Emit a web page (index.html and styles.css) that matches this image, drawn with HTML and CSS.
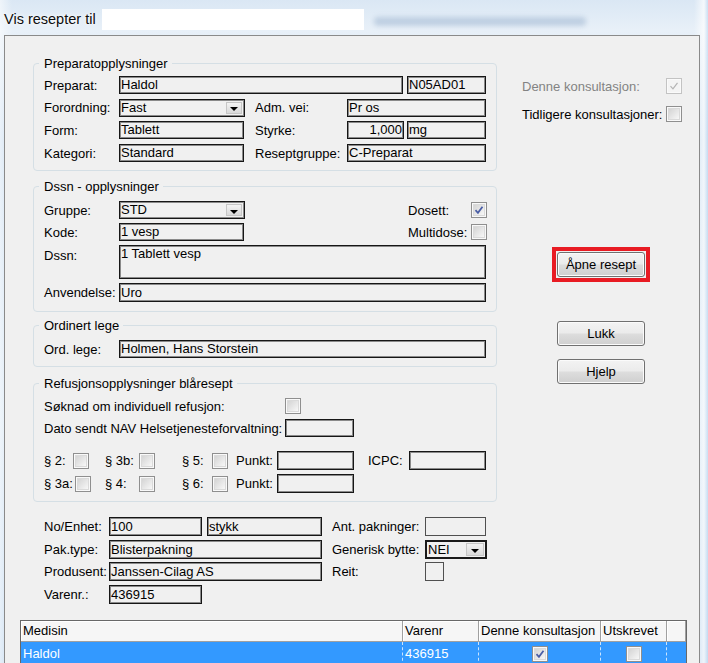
FILE: index.html
```html
<!DOCTYPE html>
<html lang="no">
<head>
<meta charset="utf-8">
<title>Vis resepter til</title>
<link rel="stylesheet" href="styles.css">
</head>
<body>
<div class="titlebar">
  <span class="title">Vis resepter til</span>
  <span class="redact"></span>
  <span class="title-blur"></span>
</div>
<div class="window">
  <div class="top">
    <div class="left-col">
      <section class="group g-prep">
        <div class="gtitle">Preparatopplysninger</div>
        <div class="row first">
          <span class="lbl">Preparat:</span>
          <span class="field w-preparat">Haldol</span>
          <span class="field w-code ml4">N05AD01</span>
        </div>
        <div class="row">
          <span class="lbl">Forordning:</span>
          <span class="combo w-combo"><span class="ctext">Fast</span><span class="cbtn"><i class="arrow"></i></span></span>
          <span class="lbl2 ml10">Adm. vei:</span>
          <span class="field w-right">Pr os</span>
        </div>
        <div class="row">
          <span class="lbl">Form:</span>
          <span class="field w-short">Tablett</span>
          <span class="lbl2 ml11">Styrke:</span>
          <span class="field w-num num">1,000</span>
          <span class="field w-code ml3">mg</span>
        </div>
        <div class="row">
          <span class="lbl">Kategori:</span>
          <span class="field w-short">Standard</span>
          <span class="lbl2 ml11">Reseptgruppe:</span>
          <span class="field w-right">C-Preparat</span>
        </div>
      </section>

      <section class="group g-dssn">
        <div class="gtitle">Dssn - opplysninger</div>
        <div class="row first">
          <span class="lbl">Gruppe:</span>
          <span class="combo w-combo"><span class="ctext">STD</span><span class="cbtn"><i class="arrow"></i></span></span>
          <span class="lbl-chk ml163">Dosett:</span>
          <span class="cb"><svg viewBox="0 0 16 16" class="tick"><path d="M4 8.2 L6.8 11.2 L12 4.3"/></svg></span>
        </div>
        <div class="row">
          <span class="lbl">Kode:</span>
          <span class="field w-short">1 vesp</span>
          <span class="lbl-chk ml164">Multidose:</span>
          <span class="cb"></span>
        </div>
        <div class="row tall">
          <span class="lbl top-lbl">Dssn:</span>
          <span class="field w-wide area">1 Tablett vesp</span>
        </div>
        <div class="row h19">
          <span class="lbl">Anvendelse:</span>
          <span class="field w-wide h19">Uro</span>
        </div>
      </section>

      <section class="group g-lege">
        <div class="gtitle">Ordinert lege</div>
        <div class="row first">
          <span class="lbl">Ord. lege:</span>
          <span class="field w-wide">Holmen, Hans Storstein</span>
        </div>
      </section>

      <section class="group g-ref">
        <div class="gtitle">Refusjonsopplysninger blåresept</div>
        <div class="row first h16">
          <span class="lbl w241">Søknad om individuell refusjon:</span>
          <span class="cb"></span>
        </div>
        <div class="row r-dato">
          <span class="lbl w241">Dato sendt NAV Helsetjenesteforvaltning:</span>
          <span class="field w69"></span>
        </div>
        <div class="row h19 r-par">
          <span class="lbl w29">§ 2:</span>
          <span class="cb"></span>
          <span class="lbl w34 ml16">§ 3b:</span>
          <span class="cb"></span>
          <span class="lbl w30 ml27">§ 5:</span>
          <span class="cb"></span>
          <span class="lbl w41 ml8">Punkt:</span>
          <span class="field w77 h19"></span>
          <span class="lbl w41 ml14">ICPC:</span>
          <span class="field w77 h19"></span>
        </div>
        <div class="row h19">
          <span class="lbl w31">§ 3a:</span>
          <span class="cb"></span>
          <span class="lbl w34 ml14">§ 4:</span>
          <span class="cb"></span>
          <span class="lbl w30 ml27">§ 6:</span>
          <span class="cb"></span>
          <span class="lbl w41 ml8">Punkt:</span>
          <span class="field w77 h19"></span>
        </div>
      </section>
    </div>

    <div class="right-col">
      <div class="crow">
        <span class="clbl disabled">Denne konsultasjon:</span>
        <span class="cb cb-disabled"><svg viewBox="0 0 16 16" class="tick grey"><path d="M4 8.2 L6.8 11.2 L12 4.3"/></svg></span>
      </div>
      <div class="crow">
        <span class="clbl">Tidligere konsultasjoner:</span>
        <span class="cb"></span>
      </div>
      <div class="highlight"><div class="btn">Åpne resept</div></div>
      <div class="btn btn-plain btn-lukk">Lukk</div>
      <div class="btn btn-plain btn-hjelp">Hjelp</div>
    </div>
  </div>

  <div class="fields">
    <div class="row first">
      <span class="lbl lbl-b">No/Enhet:</span>
      <span class="field w93">100</span>
      <span class="field w115 ml5">stykk</span>
      <span class="lbl lbl-b2">Ant. pakninger:</span>
      <span class="field thin w61"></span>
    </div>
    <div class="row">
      <span class="lbl lbl-b">Pak.type:</span>
      <span class="field w213">Blisterpakning</span>
      <span class="lbl lbl-b2">Generisk bytte:</span>
      <span class="combo thick w62"><span class="ctext">NEI</span><span class="cbtn wide"><i class="arrow"></i></span></span>
    </div>
    <div class="row">
      <span class="lbl lbl-b">Produsent:</span>
      <span class="field w213">Janssen-Cilag AS</span>
      <span class="lbl lbl-b2">Reit:</span>
      <span class="field thin w19"></span>
    </div>
    <div class="row">
      <span class="lbl lbl-b">Varenr.:</span>
      <span class="field w93">436915</span>
    </div>
  </div>

  <div class="grid">
    <div class="ghead">
      <div class="hcell">Medisin</div>
      <div class="hcell">Varenr</div>
      <div class="hcell">Denne konsultasjon</div>
      <div class="hcell">Utskrevet</div>
      <div class="hcell"></div>
    </div>
    <div class="grow">
      <div class="gcell">Haldol</div>
      <div class="gcell">436915</div>
      <div class="gcell center"><span class="cb"><svg viewBox="0 0 16 16" class="tick"><path d="M4 8.2 L6.8 11.2 L12 4.3"/></svg></span></div>
      <div class="gcell center"><span class="cb"></span></div>
      <div class="gcell last"></div>
    </div>
  </div>
</div>
</body>
</html>
```

FILE: styles.css
```css
* { box-sizing: border-box; }
html, body { margin: 0; padding: 0; }
body {
  width: 708px;
  height: 663px;
  overflow: hidden;
  font-family: "Liberation Sans", Arial, sans-serif;
  font-size: 13px;
  color: #000;
  background:
    linear-gradient(90deg, rgba(255,255,255,0.55) 0, rgba(255,255,255,0) 12px, rgba(255,255,255,0) 694px, rgba(255,255,255,0.7) 704px, rgba(190,215,240,0.6) 708px),
    linear-gradient(180deg, #dae7f4 0%, #e8f0f8 30px, #cfe0f1 140px, #dce9f5 420px, #c6dbf0 100%);
}

/* title bar */
.titlebar { height: 35px; display: flex; align-items: center; padding: 3px 0 0 4px; }
.title {
  width: 98px; flex: none;
  font-size: 14.5px; line-height: 18px; color: #0d0d0d;
  text-shadow: 0 0 7px #fff, 0 0 3px #fff;
  white-space: nowrap;
}
.redact { width: 262px; height: 21px; background: #fff; flex: none; }
.title-blur {
  width: 212px; height: 9px; margin: 4px 0 0 10px;
  background: rgba(105, 140, 180, 0.3);
  filter: blur(2.5px); border-radius: 4px;
}

/* dialog */
.window {
  margin-left: 4px; width: 696px; height: 630px;
  border: 1px solid #8a8a8a; border-bottom: 0;
  background: #f0f0f0;
  display: flex; flex-direction: column;
}
.top { display: flex; align-items: flex-start; }
.left-col { margin: 27px 0 0 28px; width: 464px; flex: none; }
.right-col { margin: 42px 0 0 25px; display: flex; flex-direction: column; }

/* group boxes */
.group { border: 1px solid #d5dfe5; border-radius: 4px; padding: 0 0 8px 10px; }
.gtitle {
  width: fit-content; height: 15px; line-height: 15px;
  margin: -8px 0 0 -5px; padding: 0 4px 0 5px;
  background: #f0f0f0; white-space: nowrap;
}
.g-dssn { margin-top: 15px; padding-bottom: 9px; }
.g-lege { margin-top: 13px; }
.g-ref { margin-top: 16px; }

/* rows */
.row { display: flex; align-items: center; height: 18px; margin-top: 4px; }
.row.first { margin-top: 7px; }
.g-prep .row { margin-top: 4.7px; }
.g-prep .row.first { margin-top: 5px; }
.row.h19 { height: 19px; }
.row.h16 { height: 16px; }
.row.tall { height: 34px; align-items: flex-start; }
.g-ref .r-dato { margin-top: 5px; }
.g-ref .r-par { margin-top: 14px; }

.lbl { width: 75px; flex: none; white-space: nowrap; }
.lbl2 { width: 92px; flex: none; white-space: nowrap; }
.lbl-chk { width: 63px; flex: none; white-space: nowrap; }
.top-lbl { margin-top: 3px; }

/* widths and gaps */
.w-preparat { width: 284px; }
.w-code { width: 79px; }
.w-combo { width: 126px; }
.w-right { width: 139px; }
.w-short { width: 125px; }
.w-num { width: 57px; }
.w-wide { width: 367px; }
.w241 { width: 241px; }
.w69 { width: 69px; }
.w77 { width: 77px; }
.w29 { width: 29px; }
.w30 { width: 30px; }
.w31 { width: 31px; }
.w34 { width: 34px; }
.w41 { width: 41px; }
.w93 { width: 93px; }
.w115 { width: 115px; }
.w213 { width: 213px; }
.w61 { width: 61px; }
.w62 { width: 62px; }
.w19 { width: 19px; height: 19px; }
.ml3 { margin-left: 3px; }
.ml4 { margin-left: 4px; }
.ml5 { margin-left: 5px; }
.ml8 { margin-left: 8px; }
.ml10 { margin-left: 10px; }
.ml11 { margin-left: 11px; }
.ml14 { margin-left: 14px; }
.ml16 { margin-left: 16px; }
.ml27 { margin-left: 27px; }
.ml163 { margin-left: 163px; }
.ml164 { margin-left: 164px; }

/* inputs */
.field {
  flex: none; height: 18px;
  border: 1px solid #161616;
  box-shadow: inset 0 0 0 1px #8a8a8a;
  padding: 0 0 0 1px;
  line-height: 16px; white-space: nowrap; overflow: hidden;
  background: #f0f0f0;
}
.field.h19 { height: 19px; line-height: 17px; }
.field.area { height: 34px; }
.field.num { text-align: right; padding: 0 1px 0 0; }
.field.thin { border-color: #505050; box-shadow: none; }

.combo {
  flex: none; display: flex; height: 18px;
  border: 1px solid #161616;
  box-shadow: inset 0 0 0 1px #8a8a8a;
  background: #f0f0f0;
}
.combo.thick { height: 19px; border: 2px solid #1a1a1a; box-shadow: none; }
.ctext { flex: 1; padding-left: 1px; line-height: 16px; white-space: nowrap; }
.combo.thick .ctext { line-height: 15px; padding-left: 1px; }
.cbtn {
  width: 16px; flex: none; margin: 2px 2px 2px 0;
  background: linear-gradient(#f3f3f3, #d9d9d9);
  border: 1px solid #c6c6c6;
  display: flex; align-items: center; justify-content: center;
}
.cbtn.wide { width: 18px; margin: 1px 1px 1px 0; }
.arrow {
  display: block; width: 0; height: 0;
  border-left: 4px solid transparent; border-right: 4px solid transparent;
  border-top: 4px solid #000; margin-top: 3px;
}

/* checkboxes */
.cb {
  flex: none; width: 16px; height: 16px;
  border: 1px solid #8f8f8f;
  background: linear-gradient(135deg, #cdcdcd 0%, #f7f7f7 85%);
  box-shadow: inset 0 0 0 1px #f9f9f9, inset 0 0 0 2px #dadada;
  display: flex; align-items: center; justify-content: center;
}
.cb-disabled { border-color: #c3c3c3; background: #f4f4f4; box-shadow: inset 0 0 0 1px #fafafa; }
.tick { width: 14px; height: 14px; fill: none; stroke: #4a5ea6; stroke-width: 2; }
.tick.grey { stroke: #b4b4b4; stroke-width: 1.4; }

/* right column */
.crow { display: flex; align-items: center; height: 16px; }
.crow + .crow { margin-top: 12px; }
.clbl { width: 144px; white-space: nowrap; }
.disabled { color: #838383; }

.btn {
  width: 88px; height: 25px;
  border: 1px solid #707070; border-radius: 3px;
  background: linear-gradient(#f3f3f3 0%, #ebebeb 48%, #dddddd 52%, #cfcfcf 100%);
  box-shadow: inset 0 0 0 1px #fbfbfb;
  display: flex; align-items: center; justify-content: center;
  white-space: nowrap;
}
.highlight { width: fit-content; margin: 125px 0 0 30px; border: 4px solid #e81b23; padding: 1px; }
.btn-plain { margin-left: 35px; }
.btn-lukk { margin-top: 39px; }
.btn-hjelp { margin-top: 13px; }

/* bottom fields */
.fields { margin: 15px 0 0 39px; }
.fields .row { height: 19px; margin-top: 3.7px; }
.fields .row.first { margin-top: 0; }
.fields .field { height: 19px; line-height: 17px; }
.fields .field.w19 { height: 19px; }
.lbl-b { width: 65px; }
.lbl-b2 { width: 93px; margin-left: 10px; }

/* grid */
.grid { flex: none; margin: 16px 0 0 15px; width: 667px; border: 1px solid #686868; border-bottom: 0; }
.ghead, .grow { display: grid; grid-template-columns: 382px 76px 122px 66px 1fr; }
.ghead { height: 21px; }
.hcell {
  background: #f6f6f6;
  border-right: 1px solid #a0a0a0; border-bottom: 1px solid #a0a0a0;
  box-shadow: inset 1px 1px 0 #fff;
  padding-left: 2px; line-height: 20px;
  white-space: nowrap; overflow: hidden;
}
.grow { height: 24px; background: #3399ff; color: #fff; }
.gcell {
  border-right: 1px dashed rgba(255, 255, 255, 0.75);
  padding-left: 2px; line-height: 22px;
  display: flex; align-items: center; white-space: nowrap;
}
.gcell.center { justify-content: center; padding-left: 0; }
.gcell.last { border-right: 0; }
```
